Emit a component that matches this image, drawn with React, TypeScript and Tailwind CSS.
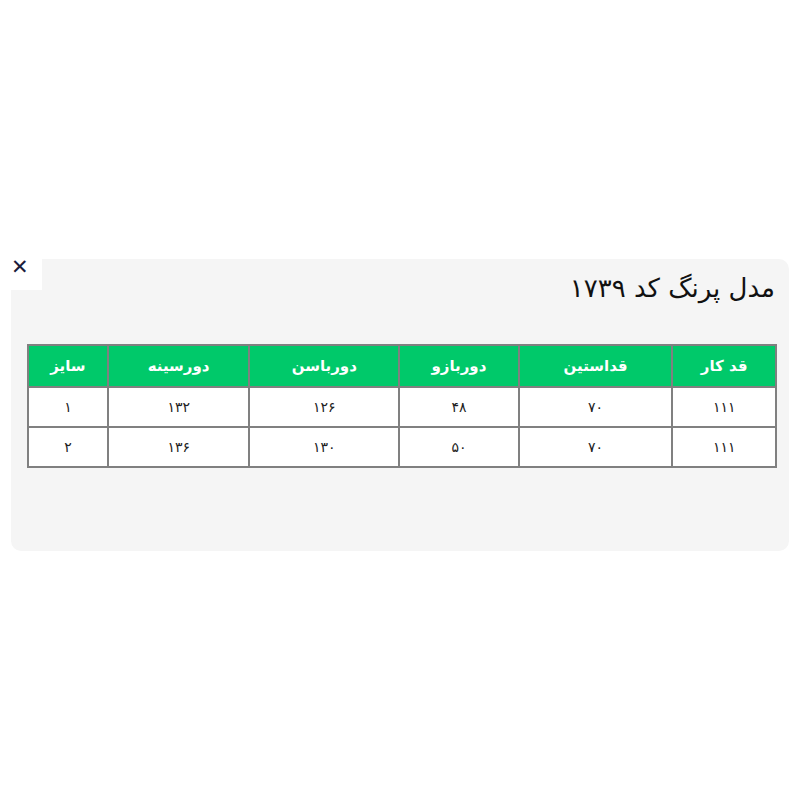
import React from 'react';

const headers = ['قد کار', 'قداستین', 'دوربازو', 'دورباسن', 'دورسینه', 'سایز'];
const widths = ['w-[104px]', 'w-[154px]', 'w-[120px]', 'w-[150px]', 'w-[142px]', 'w-[80px]'];

const rows = [
  ['۱۱۱', '۷۰', '۴۸', '۱۲۶', '۱۳۲', '۱'],
  ['۱۱۱', '۷۰', '۵۰', '۱۳۰', '۱۳۶', '۲'],
];

export default function App() {
  return (
    <div className="relative w-[800px] h-[800px] pt-[259px] bg-white font-['DejaVu_Sans',sans-serif]">
      <div className="absolute left-0 top-[250px] w-[42px] h-[40px] bg-white z-10">
        <span className="absolute left-[11px] top-[7px] text-[21px] leading-none text-[#1c1c3c]">✕</span>
      </div>

      <div dir="rtl" className="mx-[11px] h-[292px] bg-[#f5f5f5] rounded-[10px] pr-[12px] pl-[16px] pt-[12px]">
        <h2 className="pr-[2px] text-[26px] leading-[34px] text-[#111] font-normal">مدل پرنگ کد ۱۷۳۹</h2>

        <table className="mt-[39px] w-[750px] border-collapse border-2 border-[#808080] text-center">
          <thead>
            <tr className="h-[42px] bg-[#00c96a]">
              {headers.map((h, i) => (
                <th key={h} className={`${widths[i]} border-2 border-[#808080] text-white text-[15px] font-bold`}>
                  {h}
                </th>
              ))}
            </tr>
          </thead>
          <tbody>
            {rows.map((r, ri) => (
              <tr key={ri} className="h-[40px] bg-white">
                {r.map((c, ci) => (
                  <td key={ci} className="border-2 border-[#808080] text-[14px] text-[#222]">
                    {c}
                  </td>
                ))}
              </tr>
            ))}
          </tbody>
        </table>
      </div>
    </div>
  );
}
